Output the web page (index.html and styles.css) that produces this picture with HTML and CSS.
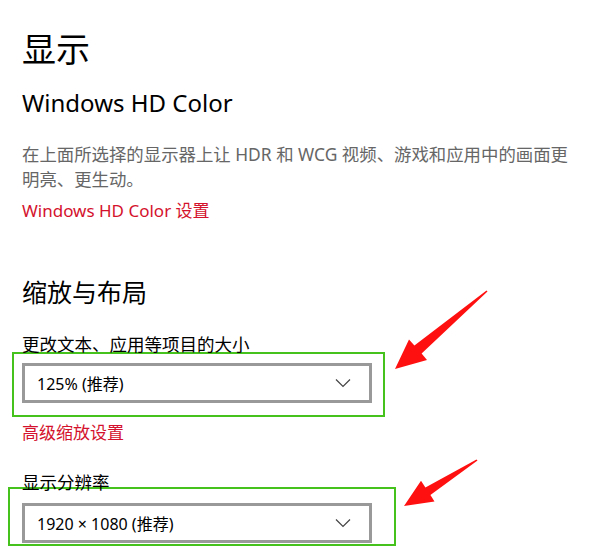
FILE: index.html
```html
<!DOCTYPE html>
<html>

    <head>
        <meta charset="utf-8">
        <title>显示设置</title>
        <link rel="stylesheet" href="styles.css">
    </head>

    <body>
        <div class="page">
            <h1 class="title">显示</h1>
            <h2 class="sub_title">Windows HD Color</h2>
            <p class="desc">在上面所选择的显示器上让 HDR 和 WCG 视频、游戏和应用中的画面更明亮、更生动。</p>
            <a class="link link_hd">Windows HD Color 设置</a>

            <h3 class="group_title">缩放与布局</h3>

            <div class="field field_scale">
                <p class="field_label">更改文本、应用等项目的大小</p>
                <div class="mark mark_scale">
                    <div class="select">
                        <span class="select_text">125% (推荐)</span>
                        <svg class="chevron" width="16" height="10" viewBox="0 0 16 10">
                            <path d="M1 1.5 L8 8.5 L15 1.5" fill="none" stroke="#444" stroke-width="1.2"/>
                        </svg>
                    </div>
                </div>
            </div>
            <a class="link link_scale">高级缩放设置</a>

            <div class="field field_res">
                <p class="field_label">显示分辨率</p>
                <div class="mark mark_res">
                    <div class="select">
                        <span class="select_text">1920 × 1080 (推荐)</span>
                        <svg class="chevron" width="16" height="10" viewBox="0 0 16 10">
                            <path d="M1 1.5 L8 8.5 L15 1.5" fill="none" stroke="#444" stroke-width="1.2"/>
                        </svg>
                    </div>
                </div>
            </div>

            <!-- 标注箭头 -->
            <svg class="arrows" width="606" height="548" viewBox="0 0 606 548">
                <polygon fill="#ff1010" points="487.5,291.5 421.6,353.6 427,360 395,369 409,339.5 414.4,345.6 486.5,290.5"/>
                <polygon fill="#ff1010" points="477.5,460.5 430.4,495 434.5,501.5 404,506 421,480.7 425.4,487.4 476.5,459.5"/>
            </svg>
        </div>
    </body>

</html>
```

FILE: styles.css
```css
* {
    margin: 0;
    padding: 0;
}

body {
    background: #fff;
    font-family: "Noto Sans", "Noto Sans CJK SC", sans-serif;
    color: #000;
}

.page {
    position: relative;
    width: 606px;
    height: 548px;
    overflow: hidden;
    padding-left: 22px;
    box-sizing: border-box;
}

.title {
    margin-top: 27px;
    font-size: 34px;
    line-height: 44px;
    font-weight: normal;
}

.sub_title {
    margin-top: 16px;
    font-size: 24px;
    line-height: 32px;
    font-weight: normal;
}

.desc {
    width: 552px;
    margin-top: 23px;
    font-size: 17.4px;
    line-height: 25px;
    color: #666;
}

.link {
    display: block;
    font-size: 17px;
    line-height: 26px;
    color: #d4122d;
    cursor: pointer;
}

.link_hd {
    margin-top: 6px;
}

.group_title {
    margin-top: 51px;
    font-size: 25px;
    line-height: 34px;
    font-weight: normal;
}

.field_label {
    font-size: 17.5px;
    line-height: 24px;
}

.field_scale {
    margin-top: 23px;
}

.field_res {
    margin-top: 24px;
}

.mark {
    border: 2px solid #45c21c;
    box-sizing: border-box;
}

.mark_scale {
    width: 373px;
    height: 65px;
    margin-left: -10px;
    margin-top: -4px;
    padding: 9px 0 0 8px;
}

.mark_res {
    width: 388px;
    height: 59px;
    margin-left: -14px;
    margin-top: -7px;
    padding: 14px 0 0 12px;
}

.select {
    display: flex;
    align-items: center;
    justify-content: space-between;
    width: 350px;
    height: 40px;
    padding: 0 18px 0 12px;
    border: 3px solid #999;
    box-sizing: border-box;
    font-size: 16px;
}

.link_scale {
    margin-top: 3px;
}

.arrows {
    position: absolute;
    left: 0;
    top: 0;
}
```
